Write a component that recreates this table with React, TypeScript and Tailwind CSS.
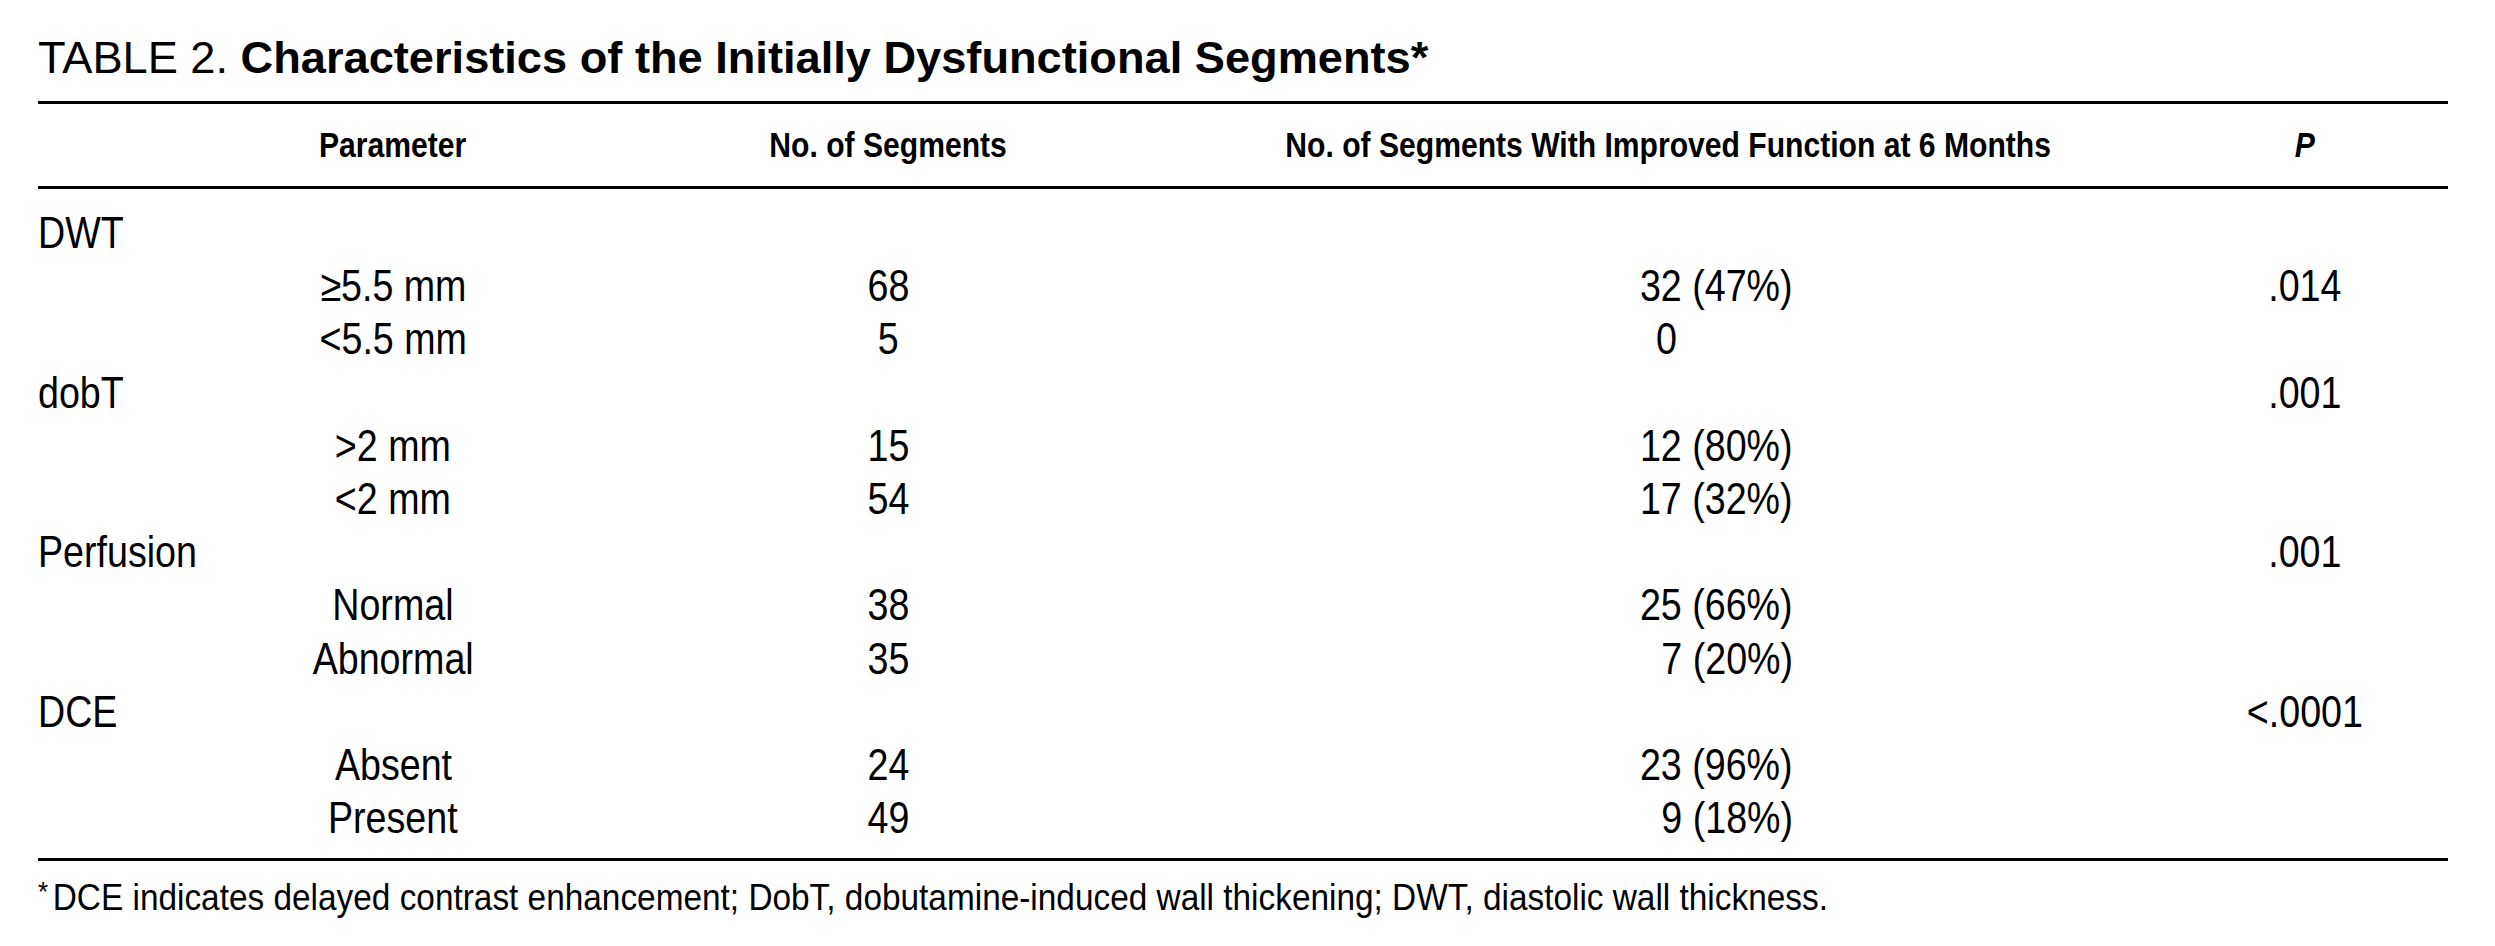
const rows = [
  { group: "DWT" },
  { sub: "≥5.5 mm", n: "68", imp: "32 (47%)", p: ".014" },
  { sub: "<5.5 mm", n: "5", imp: "0", left: true },
  { group: "dobT", p: ".001" },
  { sub: ">2 mm", n: "15", imp: "12 (80%)" },
  { sub: "<2 mm", n: "54", imp: "17 (32%)" },
  { group: "Perfusion", p: ".001" },
  { sub: "Normal", n: "38", imp: "25 (66%)" },
  { sub: "Abnormal", n: "35", imp: "7 (20%)" },
  { group: "DCE", p: "<.0001" },
  { sub: "Absent", n: "24", imp: "23 (96%)" },
  { sub: "Present", n: "49", imp: "9 (18%)" },
];

const cols = "grid grid-cols-[710px_280px_1180px_194px] items-center";

// the source face is a condensed Helvetica; Liberation Sans squeezed sideways stands in for it
function Narrow({ children, origin = "origin-center" }: { children: React.ReactNode; origin?: string }) {
  return <span className={`inline-block scale-x-[0.855] ${origin}`}>{children}</span>;
}

function NarrowBold({ children }: { children: React.ReactNode }) {
  return <span className="inline-block scale-x-[0.86] origin-center">{children}</span>;
}

export default function App() {
  return (
    <div className="min-h-screen w-[2495px] bg-white text-black font-['Liberation_Sans',Arial,sans-serif]">
      <div className="w-[2410px] ml-[38px] pt-[33px]">
        <h1 className="text-[45.2px] leading-[50px] whitespace-nowrap">
          TABLE 2. <span className="font-bold">Characteristics of the Initially Dysfunctional Segments*</span>
        </h1>

        <div className="mt-[18px] h-[3px] bg-black" />

        <div className={`${cols} h-[82px] font-bold text-[35px] whitespace-nowrap`}>
          <div className="text-center"><NarrowBold>Parameter</NarrowBold></div>
          <div className="text-center"><NarrowBold>No. of Segments</NarrowBold></div>
          <div className="pl-[100px] text-center"><NarrowBold>No. of Segments With Improved Function at 6 Months</NarrowBold></div>
          <div className="text-center italic"><NarrowBold>P</NarrowBold></div>
        </div>

        <div className="h-[3px] bg-black" />

        <div className="pt-[17px] pb-[14px] text-[44px] whitespace-nowrap">
          {rows.map((r, i) => (
            <div key={i} className={`${cols} h-[53.2px] leading-[53.2px]`}>
              {r.group ? (
                <div className="text-left"><Narrow origin="origin-left">{r.group}</Narrow></div>
              ) : (
                <div className="text-center"><Narrow>{r.sub}</Narrow></div>
              )}
              <div className="text-center">{r.n && <Narrow>{r.n}</Narrow>}</div>
              <div>
                {r.imp &&
                  (r.left ? (
                    <div className="ml-[628px] text-left">
                      <Narrow origin="origin-left">{r.imp}</Narrow>
                    </div>
                  ) : (
                    <div className="ml-[525px] w-[240px] text-right">
                      <Narrow origin="origin-right">{r.imp}</Narrow>
                    </div>
                  ))}
              </div>
              <div className="text-center">{r.p && <Narrow>{r.p}</Narrow>}</div>
            </div>
          ))}
        </div>

        <div className="h-[3px] bg-black" />

        <p className="pt-[14px] text-[36px] leading-[46px] whitespace-nowrap">
          <span className="inline-block scale-x-[0.927] origin-left">
            <span className="relative -top-[9px] text-[28px] mr-[5px]">*</span>DCE indicates delayed contrast enhancement; DobT, dobutamine-induced wall thickening; DWT, diastolic wall thickness.
          </span>
        </p>
      </div>
    </div>
  );
}
